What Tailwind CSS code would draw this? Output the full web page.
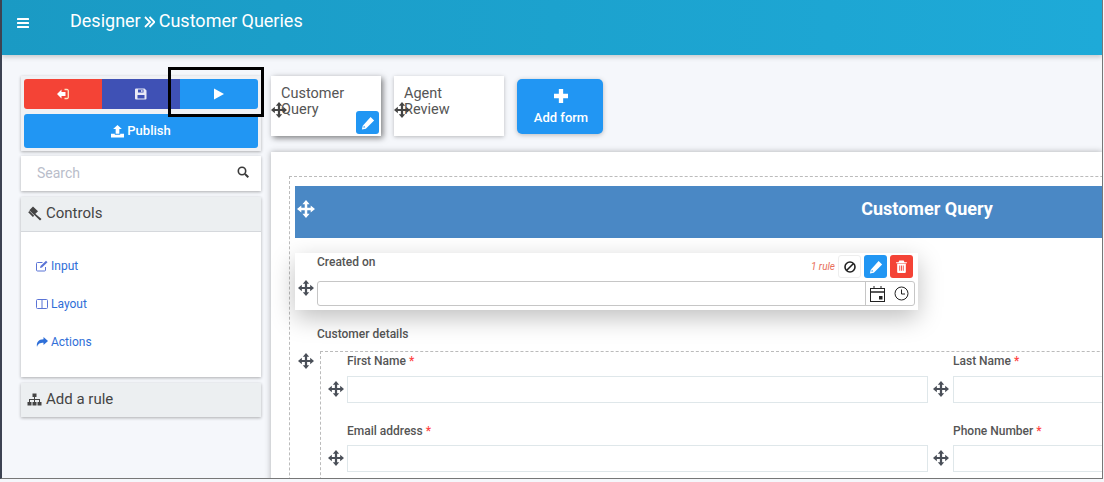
<!DOCTYPE html>
<html lang="en">
<head>
    <meta charset="UTF-8">
    <title>Designer - Customer Queries</title>
    <script src="https://cdn.jsdelivr.net/npm/@tailwindcss/browser@4"></script>
</head>
<body class="bg-[#f5f7fb] font-['Roboto',sans-serif] text-[#4a4a4a]">
    <svg class="hidden">
        <symbol id="move" viewBox="0 0 20 20"><path fill="currentColor" d="M10 0 14 4.800H11.400V8.600H15.200V6L20 10 15.200 14V11.400H11.400V15.200H14L10 20 6 15.200H8.600V11.400H4.800V14L0 10 4.800 6V8.600H8.600V4.800H6Z"/></symbol>
        <symbol id="pencil" viewBox="0 0 16 16"><path fill="currentColor" d="M11 1 15 5 5.500 14.500 1 15.500l1-4.500zM3.300 11.200l-.6 2.300 2.200-.6z"/></symbol>
    </svg>

    <div class="relative w-[1103px] h-[479px] overflow-hidden border-l-2 border-r border-b border-l-[#3d4352] border-r-[#777] border-b-[#777] bg-[#f5f7fb]">
        <!-- header -->
        <header class="relative z-10 h-[55px] flex items-start bg-gradient-to-r from-[#1a9ac4] to-[#1eaad8] shadow-[0_2px_5px_rgba(0,0,0,0.2)] text-white">
            <svg class="mt-[17px] ml-[15px] w-3 h-3" viewBox="0 0 12 12" fill="currentColor"><rect y="1" width="12" height="2" rx=".5"/><rect y="5" width="12" height="2" rx=".5"/><rect y="9" width="12" height="2" rx=".5"/></svg>
            <h1 class="ml-[41px] mt-[9px] text-[18px] leading-6 font-normal flex items-center gap-[3px]">
                Designer
                <svg class="w-[11px] h-[12px] mt-[1px] mr-px" viewBox="0 0 11 12" fill="none" stroke="currentColor" stroke-width="1.800"><path d="M1 1l5 5-5 5M5.500 1l5 5-5 5"/></svg>
                Customer Queries
            </h1>
        </header>

        <div class="flex">
            <!-- sidebar -->
            <aside class="w-[240px] ml-[19px] mt-[21px] shrink-0">
                <div class="h-[75px] p-[3px] bg-[#f0f1f4] shadow-[0_1px_3px_rgba(0,0,0,0.3)]">
                    <div class="flex h-[30px] rounded-[3px] overflow-hidden text-white">
                        <button class="flex-1 bg-[#f44336] flex items-center justify-center">
                            <svg class="w-3 h-3" viewBox="0 0 12 12"><path fill="currentColor" d="M0 6 4.500 1.500V4H8.500V8H4.500V10.500z"/><path fill="none" stroke="#ffe3c2" stroke-width="1.300" d="M7.500 1.500h2.500a1.300 1.300 0 0 1 1.300 1.300v6.400A1.300 1.300 0 0 1 10 10.500H7.500"/></svg>
                        </button>
                        <button class="flex-1 bg-[#3f51b5] flex items-center justify-center">
                            <svg class="w-3 h-3 text-[#e8e9f6]" viewBox="0 0 12 12" fill="currentColor"><path fill-rule="evenodd" d="M1 .5h8.500L11.500 2.500V10.500a1 1 0 0 1-1 1h-9.500a1 1 0 0 1-1-1v-9a1 1 0 0 1 1-1zM3 1.500v3h5.500v-3zM6.200 2h1.300v2H6.200zM2.500 7v3.500h7V7z"/></svg>
                        </button>
                        <button class="flex-1 bg-[#2196f3] flex items-center justify-center">
                            <svg class="w-3 h-3" viewBox="0 0 12 12" fill="currentColor"><path d="M1 .5 11 6 1 11.500z"/></svg>
                        </button>
                    </div>
                    <button class="mt-[5px] w-full h-[34px] rounded-[3px] bg-[#2196f3] text-white text-[13px] font-medium flex items-center justify-center gap-[3px]">
                        <svg class="w-[13px] h-[13px]" viewBox="0 0 12 12" fill="currentColor"><path d="M6 0 10 3.800H7.700V8H4.300V3.800H2zM0 8h3.500v1h5V8H12v3.500H0z"/></svg>
                        Publish
                    </button>
                </div>

                <div class="mt-[5px] h-[35px] bg-white shadow-[0_1px_3px_rgba(0,0,0,0.3)] flex items-center justify-between pl-4 pr-3 text-[14px] text-[#b9bdca]">
                    <span>Search</span>
                    <svg class="w-3 h-3 mb-[3px] text-[#3a3a3a]" viewBox="0 0 12 12" fill="none" stroke="currentColor" stroke-width="1.600"><circle cx="5" cy="5" r="3.700"/><path d="M8 8l3.300 3.300" stroke-width="2"/></svg>
                </div>

                <div class="mt-[6px] h-[180px] bg-white shadow-[0_1px_3px_rgba(0,0,0,0.3)]">
                    <div class="h-[35px] pb-[2px] bg-[#eceff1] border-b border-[#d5d8dc] flex items-center gap-1 pl-1.5 text-[15px] text-[#444]">
                        <svg class="w-[15px] h-[15px]" viewBox="0 0 15 15" fill="currentColor"><path d="M6 .5 11 5.200 7.200 9 2.300 4.200zM1.200 6.300 2.500 5l4.700 4.800-1.300 1.300zM8 7.500 14.500 13 13 14.500 6.800 8.500z"/></svg>
                        Controls
                    </div>
                    <ul class="pt-[25px] pl-[15px] text-[12px] leading-[18px] text-[#2f6fd8] flex flex-col gap-5">
                        <li class="flex items-center gap-[3px]">
                            <svg class="w-3 h-3 text-[#5b74d6]" viewBox="0 0 12 12" fill="none" stroke="currentColor"><path d="M9.500 7v3a1 1 0 0 1-1 1h-7a1 1 0 0 1-1-1V3.500a1 1 0 0 1 1-1h5"/><path d="M4 8 4.500 6 10 .8 11.500 2.200 6 7.500z" fill="currentColor" stroke="none"/></svg>
                            Input
                        </li>
                        <li class="flex items-center gap-[3px]">
                            <svg class="w-3 h-3 text-[#5b74d6]" viewBox="0 0 12 12" fill="none" stroke="currentColor"><rect x=".5" y="1.500" width="11" height="9" rx="1"/><path d="M6 1.500v9"/></svg>
                            Layout
                        </li>
                        <li class="flex items-center gap-[3px]">
                            <svg class="w-3 h-3 text-[#2f6fd8]" viewBox="0 0 12 12" fill="currentColor"><path d="M7.500 1 12 5 7.500 9V6.700C4 6.700 2 7.500 1 11 .2 6.500 2.500 3.400 7.500 3.300z"/></svg>
                            Actions
                        </li>
                    </ul>
                </div>

                <div class="mt-[6px] h-[34px] pb-[2px] bg-[#eceff1] shadow-[0_1px_3px_rgba(0,0,0,0.3)] flex items-center gap-1 pl-1.5 text-[15px] text-[#444]">
                    <svg class="w-[15px] h-[15px]" viewBox="0 0 15 15" fill="currentColor"><path d="M5.500 1.500h4v3.500h-1.500v2h5v3h1.500v3.500h-4v-3.500h1.500v-2h-4v2h1.500v3.500h-4v-3.500h1.500v-2h-4v2h1.500v3.500h-4v-3.500h1.500v-3h5v-2h-1.500z"/></svg>
                    Add a rule
                </div>
            </aside>

            <!-- main -->
            <main class="ml-[10px] min-w-0 flex-1">
                <div class="mt-[21px] h-[60px] flex items-start">
                    <div class="relative w-[110px] h-[60px] bg-white shadow-[2px_2px_6px_rgba(0,0,0,0.5)] pl-2.5 pt-[10px] text-[14.5px] leading-4 text-[#555]">
                        Customer<br>Query
                        <svg class="absolute left-0 top-[26px] w-4 h-4 text-[#444]"><use href="#move"/></svg>
                        <button class="absolute right-0.5 bottom-0.5 w-[23px] h-[23px] rounded-[3px] bg-[#2196f3] text-white flex items-center justify-center">
                            <svg class="w-3.5 h-3.5"><use href="#pencil"/></svg>
                        </button>
                    </div>
                    <div class="relative ml-[13px] w-[110px] h-[60px] bg-white shadow-[0_1px_4px_rgba(0,0,0,0.25)] pl-2.5 pt-[10px] text-[14.5px] leading-4 text-[#555]">
                        Agent<br>Review
                        <svg class="absolute left-0 top-[26px] w-4 h-4 text-[#444]"><use href="#move"/></svg>
                    </div>
                    <button class="ml-[13px] mt-[3px] w-[86px] h-[55px] pt-[3px] pl-[2px] rounded-[5px] bg-[#2196f3] text-white text-[13px] font-medium flex flex-col items-center justify-center shadow-[0_1px_5px_rgba(0,0,0,0.25)]">
                        <svg class="w-[14px] h-[14px] mb-[5px]" viewBox="0 0 13 13" fill="currentColor"><path d="M4.500 0h4v4.500H13v4H8.500V13h-4V8.500H0v-4h4.500z"/></svg>
                        Add form
                    </button>
                </div>

                <!-- canvas -->
                <div class="mt-4 h-[400px] bg-white shadow-[0_0_6px_rgba(0,0,0,0.3)] pt-6 pl-[18px]">
                    <div class="w-[1200px] h-[400px] border-l border-t border-dashed border-[#bbb] pl-[5px] pt-[9px]">
                        <div class="w-[1264px] h-[52px] pb-[7px] bg-[#4a88c5] text-white flex items-center justify-center relative text-[18px] font-bold">
                            Customer Query
                            <svg class="absolute left-[2px] top-[14px] w-[18px] h-[18px]"><use href="#move"/></svg>
                        </div>

                        <div class="relative z-10 mt-[15px] w-[623px] h-[57px] bg-white shadow-[0_8px_24px_rgba(0,0,0,0.25)] pl-[22px] pr-[3px] pt-[2px]">
                            <div class="flex items-start justify-between h-[26px]">
                                <label class="text-[12px] leading-[14px] font-medium text-[#555]">Created on</label>
                                <div class="flex items-center gap-[3px] pr-[2px]">
                                    <span class="text-[10px] italic text-[#e8705a]">1 rule</span>
                                    <button class="w-[23px] h-[23px] rounded-[3px] border border-[#eee] bg-white text-[#222] flex items-center justify-center">
                                        <svg class="w-3 h-3" viewBox="0 0 12 12" fill="none" stroke="currentColor" stroke-width="1.600"><circle cx="6" cy="6" r="5"/><path d="M2.500 9.500l7-7"/></svg>
                                    </button>
                                    <button class="w-[23px] h-[23px] rounded-[3px] bg-[#2196f3] text-white flex items-center justify-center">
                                        <svg class="w-3.5 h-3.5"><use href="#pencil"/></svg>
                                    </button>
                                    <button class="w-[23px] h-[23px] rounded-[3px] bg-[#f44336] text-white flex items-center justify-center">
                                        <svg class="w-[13px] h-[13px]" viewBox="0 0 12 12" fill="currentColor"><path fill-rule="evenodd" d="M4 .5h4l.8 1.500H11v1H1V2h2.200zM2 3.500h8V11a1 1 0 0 1-1 1H3a1 1 0 0 1-1-1zM4 5v5h.8V5zm1.600 0v5h.8V5zM7.200 5v5H8V5z"/></svg>
                                    </button>
                                </div>
                            </div>
                            <div class="flex h-[25px] border border-[#c6c6c6] rounded-[3px]">
                                <div class="flex-1"></div>
                                <div class="w-[49px] border-l border-[#c6c6c6] flex items-center gap-[9px] pl-[4px]">
                                    <svg class="w-[15px] h-[16px] text-[#222]" viewBox="0 0 15 16" fill="none" stroke="currentColor"><rect x=".5" y="2.500" width="14" height="13"/><path d="M.5 6h14" stroke-width="1.500"/><path d="M4 0v3M11 0v3"/><rect x="9" y="10" width="3.500" height="3.500" fill="currentColor" stroke="none"/></svg>
                                    <svg class="w-[15px] h-[15px] text-[#222]" viewBox="0 0 15 15" fill="none" stroke="currentColor"><circle cx="7.500" cy="7.500" r="6.500"/><path d="M7.500 3.500v4.500h3.500"/></svg>
                                </div>
                            </div>
                            <svg class="absolute left-[3px] top-[27px] w-4 h-4 text-[#4a4f58]"><use href="#move"/></svg>
                        </div>

                        <div class="relative pl-[22px]">
                            <label class="block mt-[17px] text-[12px] leading-[14px] font-medium text-[#555]">Customer details</label>
                            <svg class="absolute left-[3px] top-[26px] w-4 h-4 text-[#4a4f58]"><use href="#move"/></svg>
                            <div class="ml-[3px] mt-[10px] w-[900px] h-[200px] border-l border-t border-dashed border-[#bbb] pl-[26px] grid grid-cols-[581px_200px] gap-x-[25px] gap-y-[20px] content-start">
                                <div class="relative">
                                    <label class="block mt-[2px] text-[12px] leading-[14px] font-medium text-[#555]">First Name <span class="text-[#f44]">*</span></label>
                                    <input class="mt-[8px] block w-full h-[27px] border border-[#dfe7ea]">
                                    <svg class="absolute -left-[19px] top-[29px] w-4 h-4 text-[#4a4f58]"><use href="#move"/></svg>
                                </div>
                                <div class="relative">
                                    <label class="block mt-[2px] text-[12px] leading-[14px] font-medium text-[#555]">Last Name <span class="text-[#f44]">*</span></label>
                                    <input class="mt-[8px] block w-full h-[27px] border border-[#dfe7ea]">
                                    <svg class="absolute -left-[20px] top-[29px] w-4 h-4 text-[#4a4f58]"><use href="#move"/></svg>
                                </div>
                                <div class="relative">
                                    <label class="block mt-[1px] text-[12px] leading-[14px] font-medium text-[#555]">Email address <span class="text-[#f44]">*</span></label>
                                    <input class="mt-[7px] block w-full h-[27px] border border-[#dfe7ea]">
                                    <svg class="absolute -left-[19px] top-[27px] w-4 h-4 text-[#4a4f58]"><use href="#move"/></svg>
                                </div>
                                <div class="relative">
                                    <label class="block mt-[1px] text-[12px] leading-[14px] font-medium text-[#555]">Phone Number <span class="text-[#f44]">*</span></label>
                                    <input class="mt-[7px] block w-full h-[27px] border border-[#dfe7ea]">
                                    <svg class="absolute -left-[20px] top-[27px] w-4 h-4 text-[#4a4f58]"><use href="#move"/></svg>
                                </div>
                            </div>
                        </div>
                    </div>
                </div>
            </main>
        </div>

        <!-- highlight over the run button -->
        <div class="absolute left-[166px] top-[67px] w-[96px] h-[50px] border-[3px] border-black z-20"></div>
    </div>
</body>
</html>
